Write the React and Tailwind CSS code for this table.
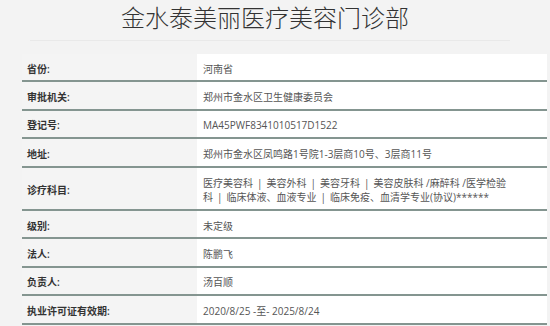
import React from "react";

const P = () => <span className="mx-[4px]">|</span>;

const rows = [
  { label: "省份:", value: "河南省" },
  { label: "审批机关:", value: "郑州市金水区卫生健康委员会" },
  { label: "登记号:", value: "MA45PWF8341010517D1522" },
  { label: "地址:", value: "郑州市金水区凤鸣路1号院1-3层商10号、3层商11号" },
  {
    label: "诊疗科目:",
    lines: [
      <>
        医疗美容科<P />美容外科<P />美容牙科<P />美容皮肤科 /麻醉科 /医学检验
      </>,
      <>
        科<P />临床体液、血液专业<P />临床免疫、血清学专业(协议)******
      </>,
    ],
  },
  { label: "级别:", value: "未定级" },
  { label: "法人:", value: "陈鹏飞" },
  { label: "负责人:", value: "汤百顺" },
  { label: "执业许可证有效期:", value: "2020/8/25 -至- 2025/8/24" },
];

export default function App() {
  return (
    <div
      className="w-[550px] h-[326px] overflow-hidden bg-[#f3f3f3]"
      style={{ fontFamily: '"Open Sans", "Noto Sans CJK SC", sans-serif' }}
    >
      <div className="mx-[30px] w-[480px] h-[41px] border-b border-[#e9e9e9] pt-[1px]">
        <div
          className="text-center text-[24px] font-light leading-[32px] text-[#333] pr-[10px]"
          style={{ fontFamily: '"Noto Sans CJK SC", sans-serif' }}
        >
          金水泰美丽医疗美容门诊部
        </div>
      </div>
      <div className="ml-[22px] w-[525px] mt-[13px]">
        {rows.map((r, i) => (
          <div
            key={i}
            className={`flex border-b-2 border-[#849590] ${r.lines ? "h-[43.4px]" : "h-[28.4px]"}`}
          >
            <div className="w-[175px] shrink-0 flex items-center pl-[5px] pt-[4px] text-[10px] font-semibold text-[#333] bg-[#f4f4f4]">
              {r.label}
            </div>
            <div className="flex-1 bg-white pl-[6px] pt-[4px] flex flex-col justify-center text-[10px] text-[#555]">
              {r.lines ? (
                r.lines.map((l, j) => (
                  <div key={j} className="whitespace-nowrap leading-[14px]">
                    {l}
                  </div>
                ))
              ) : (
                <div className="whitespace-nowrap">{r.value}</div>
              )}
            </div>
          </div>
        ))}
      </div>
    </div>
  );
}
